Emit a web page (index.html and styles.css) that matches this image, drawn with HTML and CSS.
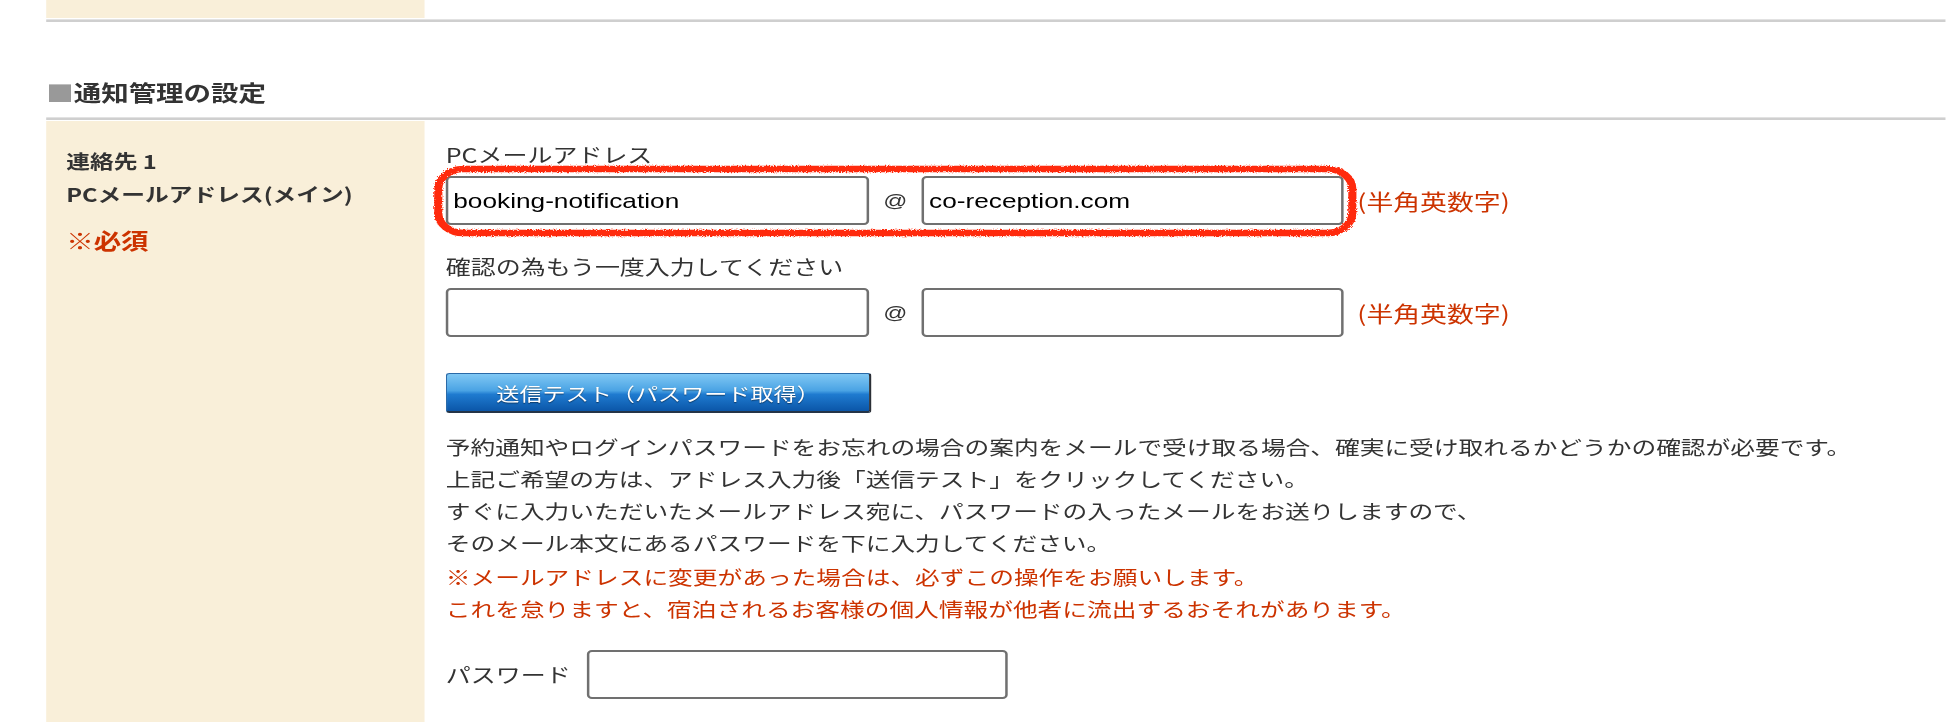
FILE: index.html
```html
<!DOCTYPE html>
<html lang="ja">
<head>
  <meta charset="UTF-8">
  <title>通知管理の設定</title>
  <link rel="stylesheet" href="styles.css">
</head>
<body>
  <div class="page">
    <div class="prev-row"><div class="prev-label"></div></div>
    <div class="rule"></div>

    <h2 class="section-title"><span class="mark">■</span>通知管理の設定</h2>
    <div class="rule"></div>

    <div class="form-row">
      <div class="form-label">
        <p class="label-title">連絡先 1<br>PCメールアドレス(メイン)</p>
        <p class="required">※必須</p>
      </div>

      <div class="form-body">
        <div class="field-title">PCメールアドレス</div>
        <div class="mail-row">
          <input class="mail-input" type="text" value="booking-notification">
          <span class="at">@</span>
          <input class="mail-input domain" type="text" value="co-reception.com">
          <span class="note">(半角英数字)</span>
          <svg class="scribble" viewBox="0 0 740 72" preserveAspectRatio="none">
            <defs>
              <filter id="rough" x="-5%" y="-30%" width="110%" height="160%">
                <feTurbulence type="fractalNoise" baseFrequency="0.9" numOctaves="2" result="noise"/>
                <feDisplacementMap in="SourceGraphic" in2="noise" scale="4"/>
              </filter>
            </defs>
            <rect x="4" y="4" width="732" height="64" rx="20" fill="none" stroke="#ff2a0a" stroke-width="6.5" filter="url(#rough)"/>
          </svg>
        </div>

        <div class="field-title confirm">確認の為もう一度入力してください</div>
        <div class="mail-row">
          <input class="mail-input" type="text">
          <span class="at">@</span>
          <input class="mail-input domain" type="text">
          <span class="note">(半角英数字)</span>
        </div>

        <button class="test-btn" type="button">送信テスト（パスワード取得）</button>

        <p class="info">
          予約通知やログインパスワードをお忘れの場合の案内をメールで受け取る場合、確実に受け取れるかどうかの確認が必要です。<br>
          上記ご希望の方は、アドレス入力後「送信テスト」をクリックしてください。<br>
          すぐに入力いただいたメールアドレス宛に、パスワードの入ったメールをお送りしますので、<br>
          そのメール本文にあるパスワードを下に入力してください。
        </p>
        <p class="warning">
          ※メールアドレスに変更があった場合は、必ずこの操作をお願いします。<br>
          これを怠りますと、宿泊されるお客様の個人情報が他者に流出するおそれがあります。
        </p>

        <div class="pass-row">
          <label class="pass-label" for="pass">パスワード</label>
          <input class="mail-input pass" id="pass" type="text">
        </div>
      </div>
    </div>
  </div>
</body>
</html>
```

FILE: styles.css
```css
body {
  margin: 0;
  overflow: hidden;
  background: #fff;
  font-family: "Noto Sans CJK JP", sans-serif;
  color: #333;
}

/* screenshot is wider than tall: stretch the 1568px layout */
.page {
  width: 1568px;
  box-sizing: border-box;
  padding: 0 10px 0 37px;
  transform: scaleX(1.2487);
  transform-origin: 0 0;
}

.prev-row {
  height: 18px;
}

.prev-label {
  width: 303px;
  height: 100%;
  background: #f9efd9;
}

.rule {
  margin-top: 1px;
  border-top: 1px solid #e2e2e2;
  border-bottom: 2px solid #cfcfcf;
}

.section-title {
  margin: 53px 0 10px;
  font-size: 22px;
  line-height: 32px;
  font-weight: bold;
  color: #333;
}

.section-title .mark {
  color: #999;
}

.form-row {
  display: flex;
  margin-top: 1px;
  padding-bottom: 60px;
}

.form-label {
  width: 303px;
  flex-shrink: 0;
  box-sizing: border-box;
  padding: 23px 0 0 16px;
  background: #f9efd9;
  margin-bottom: -60px;
}

.label-title {
  margin: 0;
  font-size: 19px;
  line-height: 33px;
  font-weight: bold;
  color: #333;
}

.required {
  margin: 13px 0 0;
  font-size: 22px;
  line-height: 32px;
  font-weight: bold;
  color: #cc3300;
}

.form-body {
  padding: 18px 0 0 17px;
}

.field-title {
  font-size: 20px;
  line-height: 32px;
}

.field-title.confirm {
  margin-top: 26px;
}

.mail-row {
  position: relative;
  display: flex;
  align-items: center;
  margin-top: 5px;
}

.mail-input {
  width: 339px;
  height: 49px;
  box-sizing: border-box;
  margin: 0;
  padding: 0 4px;
  border: 2px solid #707070;
  border-radius: 4px;
  background: #fff;
  font-family: "Liberation Sans", Arial, sans-serif;
  font-size: 21px;
  color: #000;
  outline: none;
}

.mail-input.domain {
  width: 338px;
}

.at {
  width: 42px;
  text-align: center;
  font-family: "Liberation Sans", Arial, sans-serif;
  font-size: 19px;
  color: #333;
}

.note {
  margin-left: 11px;
  font-size: 21.5px;
  color: #cc3300;
}

.scribble {
  position: absolute;
  left: -10px;
  top: -11px;
  width: 740px;
  height: 72px;
  overflow: visible;
  pointer-events: none;
}

.test-btn {
  display: block;
  width: 341px;
  height: 40px;
  margin-top: 36px;
  padding: 0;
  border: 1px solid #2a6aa8;
  border-right: 2px solid #2b2f36;
  border-bottom: 2px solid #243447;
  border-radius: 3px;
  background: linear-gradient(#80c8f4, #4aa3e4 45%, #1f7bd0 55%, #0b56a8);
  color: #fff;
  font-family: "Noto Sans CJK JP", sans-serif;
  font-size: 18.5px;
  text-shadow: 0 1px 1px rgba(0, 0, 0, 0.45);
}

.info,
.warning {
  margin: 0;
  font-size: 19.8px;
  line-height: 32px;
}

.info {
  margin-top: 18px;
}

.warning {
  margin-top: 2px;
  color: #cc3300;
}

.pass-row {
  display: flex;
  align-items: center;
  margin-top: 25px;
}

.pass-label {
  margin-right: 13px;
  font-size: 20px;
}

.mail-input.pass {
  width: 337px;
}
```
